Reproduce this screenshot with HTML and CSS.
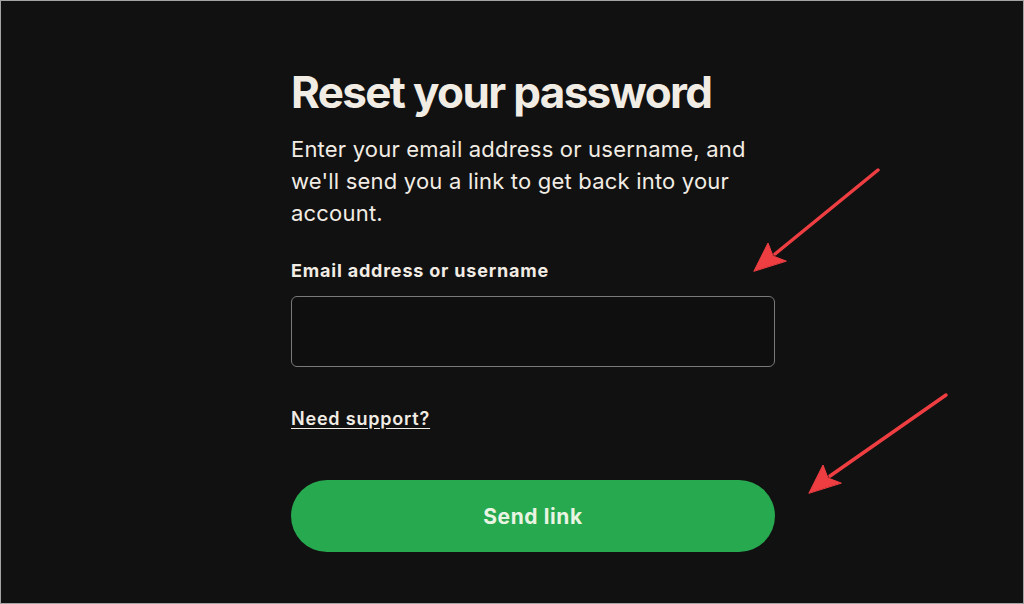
FILE: index.html
```html
<!DOCTYPE html>
<html lang="en">
<head>
<meta charset="utf-8">
<title>Reset your password</title>
<link rel="stylesheet" href="styles.css">
</head>
<body>
<div class="frame">
  <main class="form">
    <h1 class="title">Reset your password</h1>
    <p class="intro">Enter your email address or username, and we'll send you a link to get back into your account.</p>
    <label class="label" for="user">Email address or username</label>
    <input class="field" id="user" type="text">
    <a class="support" href="#">Need support?</a>
    <button class="send" type="button">Send link</button>
  </main>
  <svg class="arrows" width="1024" height="604" viewBox="0 0 1024 604">
    <g fill="#ef3e42" stroke="#ef3e42" stroke-linecap="round" stroke-linejoin="round">
      <line x1="878" y1="170" x2="775" y2="254" stroke-width="3.5"/>
      <polygon points="754,271 768,243 773,256 786,261" stroke-width="1"/>
      <line x1="946" y1="395" x2="830" y2="476" stroke-width="3.5"/>
      <polygon points="809,493 823,465 828,478 841,483" stroke-width="1"/>
    </g>
  </svg>
</div>
</body>
</html>
```
FILE: styles.css
```css
* { box-sizing: border-box; }
html, body { margin: 0; padding: 0; background: #a4a4a4; }
.frame {
  position: relative;
  width: 1024px;
  height: 604px;
  border: 1px solid #a4a4a4;
  background: #111111;
  overflow: hidden;
  font-family: Inter, "Liberation Sans", sans-serif;
  color: #f1ece4;
}
.form {
  display: flex;
  flex-direction: column;
  align-items: flex-start;
  width: 484px;
  margin-left: 290px;
  padding-top: 64px;
}
.title {
  margin: 0;
  font-size: 44px;
  font-weight: 700;
  letter-spacing: -1.65px;
  line-height: 54px;
}
.intro {
  margin: 14px 0 0;
  font-size: 22px;
  line-height: 32px;
  font-weight: 400;
  letter-spacing: 0.2px;
}
.label {
  margin-top: 30px;
  font-size: 18px;
  font-weight: 700;
  line-height: 24px;
  letter-spacing: 0.8px;
}
.field {
  margin-top: 13px;
  width: 484px;
  height: 71px;
  background: #0f0f0f;
  border: 1px solid #7a7a7a;
  border-radius: 6px;
  outline: none;
}
.support {
  margin-top: 40px;
  font-size: 18px;
  font-weight: 600;
  letter-spacing: 0.8px;
  color: #f1ece4;
  text-decoration: underline;
  text-underline-offset: 3px;
  line-height: 24px;
}
.send {
  margin-top: 49px;
  width: 484px;
  height: 72px;
  border: none;
  border-radius: 36px;
  background: #27a950;
  color: #eaf4e3;
  font-family: Inter, "Liberation Sans", sans-serif;
  font-size: 21px;
  font-weight: 700;
  letter-spacing: 0.6px;
}
.arrows {
  position: absolute;
  left: -1px;
  top: -1px;
  pointer-events: none;
}
```
